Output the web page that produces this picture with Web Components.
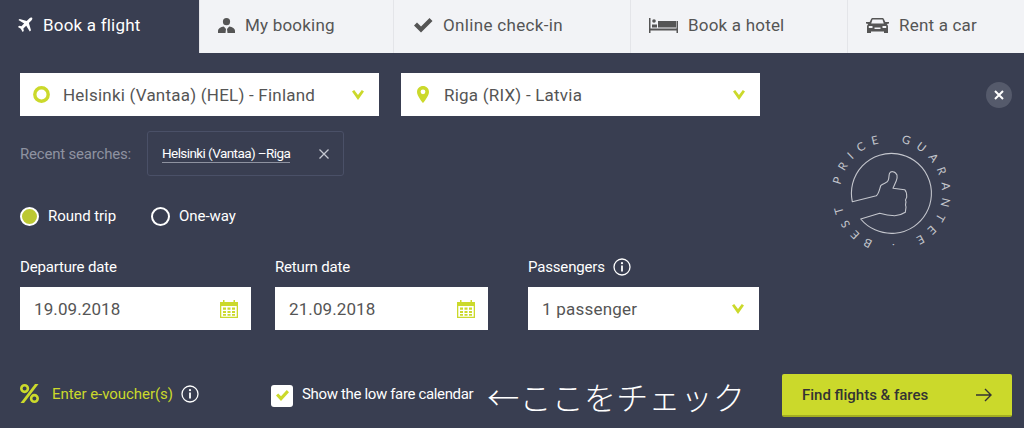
<!DOCTYPE html>
<html>
<head>
<meta charset="utf-8">
<style>
html, body {margin: 0; padding: 0; background: #393e51;}
body {font-family: Roboto, "Noto Sans CJK JP", sans-serif; width: 1024px; height: 428px; overflow: hidden;}
</style>
</head>
<body>
<bf-widget></bf-widget>

<script>
const LIME = '#cbd92b';

const ICONS = {
    plane: '<svg width="16" height="16" viewBox="0 0 17 17"><path fill="#fff" d="M16 .8c-.8-.6-2-.3-3 .7L10.300 4.200 2.800 2 1.500 3.300 7.600 6.900 4.700 9.800 2.300 9.400 1 10.600 4 12.600 6 16 7.200 14.800 6.800 12.300 9.800 9.400 13.600 15.500 14.900 14.200 12.600 6.500 15.300 3.800C16.300 2.800 16.600 1.500 16 .8Z"/></svg>',
    user: '<svg width="17" height="15" viewBox="0 0 17 15"><circle cx="8.500" cy="3.700" r="3.600" fill="#555"/><path fill="#555" d="M0 15V12.800C0 10.500 2.500 9 5.800 8.500L8 11 7.500 15H9.500L9 11 11.200 8.500C14.500 9 17 10.500 17 12.800V15Z"/></svg>',
    check: '<svg width="19" height="15" viewBox="0 0 19 15"><path fill="#555" d="M0 7.500 3 4.500 7 8.500 15.500 0 18.500 3 7 14.500Z"/></svg>',
    bed: '<svg width="29" height="15" viewBox="0 0 29 15"><path fill="#555" d="M0 0H1.500V10.500H27.500V3H29V15H27.500V12.500H1.500V15H0Z"/><circle cx="5" cy="3" r="1.800" fill="#555"/><path fill="#555" d="M3 6.500H8V9.500H3ZM9 3H27V9.500H9Z"/></svg>',
    car: '<svg width="23" height="15" viewBox="0 0 23 15"><path fill="#555" fill-rule="evenodd" d="M5 1.200C5.300.5 6 0 7 0H16C17 0 17.700.5 18 1.200L19.300 4H23V5.500L20.800 6C21.600 6.800 22 7.600 22 8.500V15H18V13.500H5V15H1V8.500C1 7.600 1.400 6.800 2.200 6L0 5.500V4H3.700ZM6.500 1.500 5.200 5.500H17.800L16.500 1.500ZM2.800 8V10H6.500V8ZM16.500 8V10H20.200V8ZM8.500 9.500V11H14.500V9.500Z"/></svg>',
    chevron: `<svg width="12" height="10" viewBox="0 0 12 10"><path fill="${LIME}" d="M0 1.500 2.200 0 6 5 9.800 0 12 1.500 6 10Z"/></svg>`,
    pin: `<svg width="12" height="17" viewBox="0 0 12 17"><path fill="${LIME}" fill-rule="evenodd" d="M6 0C2.700 0 0 2.600 0 5.900 0 10 6 17 6 17S12 10 12 5.900C12 2.600 9.300 0 6 0ZM6 8.200A2.400 2.400 0 1 1 6 3.400 2.400 2.400 0 0 1 6 8.200Z"/></svg>`,
    ring: `<svg width="17" height="17" viewBox="0 0 17 17"><circle cx="8.500" cy="8.500" r="6.700" fill="none" stroke="${LIME}" stroke-width="3.400"/></svg>`,
    calendar: `<svg width="18" height="18" viewBox="0 0 18 18"><path fill="${LIME}" fill-rule="evenodd" d="M0 2H3V0H4.500V2H13.500V0H15V2H18V18H0ZM1.300 6V16.700H16.700V6ZM3 7.500H6V9.800H3ZM7.500 7.500H10.500V9.800H7.500ZM12 7.500H15V9.800H12ZM3 11H6V13H3ZM7.500 11H10.500V13H7.500ZM12 11H15V13H12ZM3 14H6V15.700H3ZM7.500 14H10.500V15.700H7.500ZM12 14H15V15.700H12Z"/></svg>`,
    info: '<svg width="18" height="18" viewBox="0 0 18 18"><circle cx="9" cy="9" r="8" fill="none" stroke="#fff" stroke-width="1.300"/><rect x="8.100" y="7.500" width="1.800" height="6" fill="#fff"/><circle cx="9" cy="5.200" r="1.100" fill="#fff"/></svg>',
    percent: `<svg width="19" height="19" viewBox="0 0 19 19"><g fill="none" stroke="${LIME}" stroke-width="2.600"><circle cx="4.600" cy="4.600" r="3.300"/><circle cx="14.400" cy="14.400" r="3.300"/></g><path fill="${LIME}" d="M15 0H18.500L4 19H.5Z"/></svg>`,
    arrow: '<svg width="16" height="14" viewBox="0 0 16 14"><path fill="none" stroke="#333" stroke-width="1.400" d="M0 7H15M9 1 15 7 9 13"/></svg>',
    cross: '<svg width="10" height="10" viewBox="0 0 10 10"><path stroke="#c6c9d2" stroke-width="1.300" d="M.5.500 9.500 9.500M9.500.500 .5 9.500"/></svg>'
};

class BfTab extends HTMLElement {
    constructor() {
        super();
        this._root = this.attachShadow({mode: 'open'});
    }
    connectedCallback() {
        this._root.innerHTML =
`<style>
:host {display: flex; align-items: center; height: 53px; box-sizing: border-box; padding-bottom: 3px; background: #f2f3f6; color: #555; font-size: 17px; letter-spacing: .2px; border-left: 1px solid #e4e5e9; padding-left: var(--pad);}
:host([active]) {background: #393e51; color: #fff; border-left: 0;}
.icon {display: flex; margin-right: var(--gap);}
</style>
<span class="icon">${ICONS[this.getAttribute('icon')]}</span><slot></slot>`;
    }
}
customElements.define('bf-tab', BfTab);

class BfTabs extends HTMLElement {
    constructor() {
        super();
        this.attachShadow({mode: 'open'}).innerHTML =
`<style>
:host {display: grid; grid-template-columns: 199px 194px 237px 217px 177px; background: #393e51;}
</style>
<slot></slot>`;
    }
}
customElements.define('bf-tabs', BfTabs);

// white box used by selects and date inputs
class BfInput extends HTMLElement {
    constructor() {
        super();
        this._root = this.attachShadow({mode: 'open'});
    }
    connectedCallback() {
        const lead = this.getAttribute('lead');
        this._root.innerHTML =
`<style>
:host {display: flex; align-items: center; height: 43px; box-sizing: border-box; background: #fff; color: #555; font-size: 17px; letter-spacing: .22px; padding: 0 15px 0 14px;}
:host([tail=calendar]) {padding-right: 13px; letter-spacing: .1px;}
.lead {display: flex; justify-content: center; width: 17px; margin: 0 13px 0 -1px;}
.text {flex: 1;}
.tail {display: flex;}
</style>
${lead ? `<span class="lead">${ICONS[lead]}</span>` : ''}
<span class="text"><slot></slot></span>
<span class="tail">${ICONS[this.getAttribute('tail')]}</span>`;
    }
}
customElements.define('bf-input', BfInput);

class BfField extends HTMLElement {
    constructor() {
        super();
        this._root = this.attachShadow({mode: 'open'});
    }
    connectedCallback() {
        const info = this.hasAttribute('info') ? `<span class="info">${ICONS.info}</span>` : '';
        this._root.innerHTML =
`<style>
:host {display: block; color: #fff;}
.label {display: flex; align-items: center; height: 20px; margin-bottom: 10px; font-size: 15px; letter-spacing: -.17px;}
.info {display: flex; margin-left: 8px;}
</style>
<div class="label">${this.getAttribute('label')}${info}</div>
<slot></slot>`;
    }
}
customElements.define('bf-field', BfField);

class BfRadio extends HTMLElement {
    constructor() {
        super();
        this._root = this.attachShadow({mode: 'open'});
    }
    connectedCallback() {
        this._root.innerHTML =
`<style>
:host {display: inline-flex; align-items: center; gap: 9px; color: #fff; font-size: 15px; letter-spacing: -.05px;}
i {display: block; width: 19px; height: 19px; box-sizing: border-box; border-radius: 50%; border: 2px solid #fff;}
:host([checked]) i {background: #bcc832;}
</style>
<i></i><slot></slot>`;
    }
}
customElements.define('bf-radio', BfRadio);

class BfRecent extends HTMLElement {
    constructor() {
        super();
        this.attachShadow({mode: 'open'}).innerHTML =
`<style>
:host {display: flex; align-items: center; height: 45px;}
.label {width: 127px; color: #8e92a0; font-size: 15px; letter-spacing: -.2px;}
.chip {display: flex; align-items: center; justify-content: space-between; box-sizing: border-box; width: 197px; height: 45px; padding: 0 14px 0 14px; border: 1px solid #4a5067; border-radius: 3px; color: #fff; font-size: 13.500px; letter-spacing: -.58px;}
.chip span {border-bottom: 1px solid #8e92a0; line-height: 17px;}
svg {display: block;}
</style>
<div class="label">Recent searches:</div>
<div class="chip"><span><slot></slot></span>${ICONS.cross}</div>`;
    }
}
customElements.define('bf-recent', BfRecent);

class BfButton extends HTMLElement {
    constructor() {
        super();
        this.attachShadow({mode: 'open'}).innerHTML =
`<style>
:host {display: flex; align-items: center; justify-content: space-between; box-sizing: border-box; width: 230px; height: 43px; padding: 0 20px 0 20px; background: ${LIME}; border-bottom: 2px solid #a3ae20; border-radius: 2px; color: #333; font-size: 15px; font-weight: 500;}
svg {display: block;}
</style>
<slot></slot>${ICONS.arrow}`;
    }
}
customElements.define('bf-button', BfButton);

class BfCheck extends HTMLElement {
    constructor() {
        super();
        this.attachShadow({mode: 'open'}).innerHTML =
`<style>
:host {display: flex; align-items: center; gap: 9px; color: #fff; font-size: 15px; letter-spacing: -.35px;}
i {display: flex; align-items: center; justify-content: center; width: 22px; height: 22px; background: #fff; border-radius: 3px;}
slot {display: block; margin-bottom: 3px;}
</style>
<i><svg width="13" height="11" viewBox="0 0 13 11"><path fill="${LIME}" d="M0 5.500 2.200 3.500 5 6.200 10.800 0 13 2.200 5 11Z"/></svg></i><slot></slot>`;
    }
}
customElements.define('bf-check', BfCheck);

class BfVoucher extends HTMLElement {
    constructor() {
        super();
        this.attachShadow({mode: 'open'}).innerHTML =
`<style>
:host {display: flex; align-items: center; padding-bottom: 4px; color: ${LIME}; font-size: 15px; letter-spacing: -.05px;}
span {display: flex;}
.pct {margin-right: 13px;}
.inf {margin-left: 8px;}
</style>
<span class="pct">${ICONS.percent}</span><slot></slot><span class="inf">${ICONS.info}</span>`;
    }
}
customElements.define('bf-voucher', BfVoucher);

class BfBadge extends HTMLElement {
    constructor() {
        super();
        this.attachShadow({mode: 'open'}).innerHTML =
`<style>
:host {display: block; width: 130px; height: 130px;}
svg {display: block; overflow: visible;}
text {font-family: Lato, sans-serif; font-size: 11.500px; letter-spacing: 7px; word-spacing: 5px; fill: #c4c6cd;}
</style>
<svg width="130" height="130" viewBox="828 129 130 130">
<defs><path id="ring" d="M893 245A51 51 0 1 1 893.100 245A51 51 0 0 1 843 204"/></defs>
<path fill="none" stroke="#c4c6cd" stroke-width="1.100" stroke-linejoin="round" d="M854.300 202.700 878.300 196.700C881 194.500 881.500 190 882.700 186.700 885 184 889.500 184 890 181.700 891.500 179 890.500 176 891.700 174 892.500 172.300 897 171.500 899 176 899.500 179 898.300 181.700 898.300 181.700L895 189.300 906.700 190.700C909 193 908.700 196 908.700 198.300 907.500 200 907 201 908 203 907.500 205 907 206 908 208 907.800 210 907.500 212 907.300 213.300 904 215.500 900 216.700 896.700 216.700 891 216.500 886 215.500 881.700 214.300L862.700 220A40 40 0 1 0 854.300 202.700Z"/>
<text><textPath href="#ring" startOffset="18">BEST PRICE GUARANTEE .</textPath></text>
</svg>`;
    }
}
customElements.define('bf-badge', BfBadge);

class BfWidget extends HTMLElement {
    constructor() {
        super();
        this.attachShadow({mode: 'open'}).innerHTML =
`<style>
:host {display: block; height: 428px; color: #fff;}
.body {display: grid; grid-template-columns: 762px 1fr; padding: 20px 12px 0 20px;}
.row {display: grid; gap: 22px;}
.route {grid-template-columns: 359px 359px;}
.trip {display: flex; gap: 35px; margin-top: 30px; height: 20px; align-items: center;}
.dates {display: grid; grid-template-columns: 231px 213px 247px; gap: 0 24px; margin-top: 31px;}
.dates bf-field:last-child {margin-left: 16px;}
.bottom {display: grid; grid-template-columns: 251px 1fr 230px; align-items: center; padding: 0 12px 0 20px; margin-top: 44px;}
.note {display: flex; align-items: center; gap: 14px;}
.note b {font-weight: 300; font-size: 32px; letter-spacing: .25px; line-height: 42px; white-space: nowrap; font-family: "Noto Sans CJK JP", sans-serif;}
.side {display: flex; flex-direction: column; align-items: flex-end;}
.close {display: flex; align-items: center; justify-content: center; width: 26px; height: 26px; margin-top: 9px; border-radius: 50%; background: #555a6b; color: #fff;}
bf-badge {align-self: flex-start; margin: 20px 0 0 44px;}
bf-recent {margin-top: 15px;}
</style>
<bf-tabs>
    <bf-tab active icon="plane" style="--pad:17px; --gap:10px">Book a flight</bf-tab>
    <bf-tab icon="user" style="--pad:18px; --gap:10px">My booking</bf-tab>
    <bf-tab icon="check" style="--pad:20px; --gap:10px; letter-spacing:.33px">Online check-in</bf-tab>
    <bf-tab icon="bed" style="--pad:18px; --gap:10px">Book a hotel</bf-tab>
    <bf-tab icon="car" style="--pad:18px; --gap:10px">Rent a car</bf-tab>
</bf-tabs>
<div class="body">
    <div>
        <div class="row route">
            <bf-input lead="ring" tail="chevron">Helsinki (Vantaa) (HEL) - Finland</bf-input>
            <bf-input lead="pin" tail="chevron">Riga (RIX) - Latvia</bf-input>
        </div>
        <bf-recent>Helsinki (Vantaa) –Riga</bf-recent>
        <div class="trip">
            <bf-radio checked>Round trip</bf-radio>
            <bf-radio>One-way</bf-radio>
        </div>
        <div class="dates">
            <bf-field label="Departure date"><bf-input tail="calendar">19.09.2018</bf-input></bf-field>
            <bf-field label="Return date"><bf-input tail="calendar">21.09.2018</bf-input></bf-field>
            <bf-field label="Passengers" info><bf-input tail="chevron">1 passenger</bf-input></bf-field>
        </div>
    </div>
    <div class="side">
        <div class="close"><svg width="10" height="10" viewBox="0 0 10 10"><path stroke="#fff" stroke-width="2" d="M1 1 9 9M9 1 1 9"/></svg></div>
        <bf-badge></bf-badge>
    </div>
</div>
<div class="bottom">
    <bf-voucher>Enter e-voucher(s)</bf-voucher>
    <div class="note"><bf-check>Show the low fare calendar</bf-check><b>←ここをチェック</b></div>
    <bf-button>Find flights &amp; fares</bf-button>
</div>`;
    }
}
customElements.define('bf-widget', BfWidget);
</script>
</body>
</html>
